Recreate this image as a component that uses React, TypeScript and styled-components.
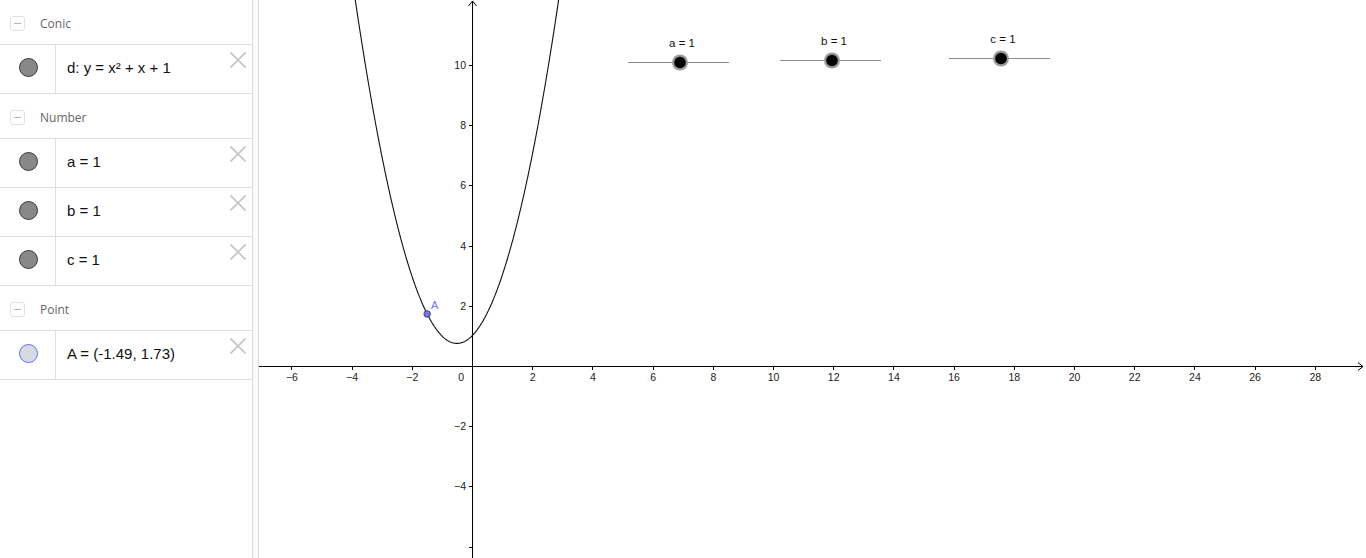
import React from "react";
import styled, { createGlobalStyle } from "styled-components";

const GlobalStyle = createGlobalStyle`
  html, body { margin: 0; padding: 0; background: #fff; }
  body { font-family: "Liberation Sans", Arial, sans-serif; overflow: hidden; }
  #root { width: 1366px; height: 558px; }
`;

const Layout = styled.div`
  display: flex;
  width: 1366px;
  height: 558px;
  overflow: hidden;
`;

const AlgebraPanel = styled.div`
  width: 252px;
  flex: none;
  height: 100%;
  border-right: 1px solid #dcdcdc;
  background: #fff;
  display: flex;
  flex-direction: column;
`;

const Splitter = styled.div`
  width: 5px;
  flex: none;
  height: 100%;
  background: #fafafa;
  border-right: 1px solid #dcdcdc;
`;

const GraphView = styled.div`
  flex: 1;
  height: 100%;
  position: relative;
  overflow: hidden;
`;

const GroupHeader = styled.div`
  height: 44px;
  border-bottom: 1px solid #dedede;
  display: flex;
  align-items: center;
  padding-left: 10px;
  padding-top: 2px;
  gap: 15px;
  box-sizing: border-box;
  height: 45px;
`;

const CollapseToggle = styled.span`
  width: 13px;
  height: 13px;
  border: 1px solid #e2e2e2;
  border-radius: 3px;
  display: flex;
  align-items: center;
  justify-content: center;
  &::before {
    content: "";
    width: 7px;
    height: 1px;
    background: #b5b5b5;
  }
`;

const GroupTitle = styled.span`
  font-family: "Open Sans", "Noto Sans", sans-serif;
  font-size: 12px;
  color: #666;
`;

const ItemRow = styled.div`
  height: 48px;
  border-bottom: 1px solid #dedede;
  display: flex;
  position: relative;
  box-sizing: content-box;
`;

const MarkerCell = styled.div`
  width: 56px;
  flex: none;
  border-right: 1px solid #dedede;
  display: flex;
  align-items: center;
  justify-content: center;
  padding-bottom: 4px;
  padding-left: 1px;
  box-sizing: border-box;
`;

const Marker = styled.span<{ $point?: boolean }>`
  width: 17px;
  height: 17px;
  border-radius: 50%;
  background: ${(p) => (p.$point ? "#d9d9e1" : "#888888")};
  border: 1px solid ${(p) => (p.$point ? "#6a6af0" : "#3a3a3a")};
`;

const ItemText = styled.div`
  flex: 1;
  display: flex;
  align-items: center;
  padding-left: 11px;
  padding-bottom: 4px;
  font-family: "Liberation Sans", Arial, sans-serif;
  font-size: 15px;
  color: #111;
  white-space: pre;
`;

const DeleteButton = styled.span`
  position: absolute;
  right: 6px;
  top: 7px;
  width: 16px;
  height: 16px;
  display: block;
  svg { display: block; }
`;

const CloseIcon = () => (
  <svg width="16" height="16" viewBox="0 0 16 16">
    <path d="M0.5 0.5 L15.5 15.5 M15.5 0.5 L0.5 15.5" stroke="#c4c4c4" strokeWidth="1.6" fill="none" />
  </svg>
);

type Item = { text: React.ReactNode; point?: boolean };
type Group = { title: string; items: Item[] };

const groups: Group[] = [
  { title: "Conic", items: [{ text: <>d: y = x² + x + 1</> }] },
  {
    title: "Number",
    items: [{ text: "a = 1" }, { text: "b = 1" }, { text: "c = 1" }],
  },
  { title: "Point", items: [{ text: "A = (-1.49, 1.73)", point: true }] },
];

/* ---------- graph geometry (page coordinates) ---------- */
const OX = 472;
const OY = 366;
const S = 30.1;
const px = (x: number) => OX + x * S;
const py = (y: number) => OY - y * S;

const parabolaPath = (() => {
  const pts: string[] = [];
  for (let x = -4.2; x <= 3.2; x += 0.02) {
    const y = x * x + x + 1;
    pts.push(`${pts.length ? "L" : "M"}${px(x).toFixed(2)} ${py(y).toFixed(2)}`);
  }
  return pts.join(" ");
})();

const xTicks = Array.from({ length: 18 }, (_, i) => -6 + i * 2).filter((v) => v !== 0);
const yTicks = [10, 8, 6, 4, 2, -2, -4, -6];

const fmt = (v: number) => (v < 0 ? `\u2212${Math.abs(v)}` : `${v}`);

const Slider = ({ x1, x2, y, knob, label }: { x1: number; x2: number; y: number; knob: number; label: string }) => (
  <g>
    <line x1={x1} y1={y} x2={x2} y2={y} stroke="#8a8a8a" strokeWidth="1.2" />
    <circle cx={knob} cy={y} r={8} fill="#9a9a9a" />
    <circle cx={knob} cy={y} r={5.8} fill="#000" />
    <text x={knob + 2} y={y - 15.5} textAnchor="middle" fontSize="11.5" fontFamily="Liberation Sans, Arial, sans-serif" fill="#111">
      {label}
    </text>
  </g>
);

const Graph = () => (
  <svg width="1107" height="558" viewBox="259 0 1107 558" style={{ display: "block" }}>
    <g fontFamily="Liberation Sans, Arial, sans-serif" fontSize="10.5" fill="#222">
      {/* axes */}
      <line x1={259} y1={OY + 0.5} x2={1363} y2={OY + 0.5} stroke="#000" strokeWidth="1" />
      <line x1={OX + 0.5} y1={1} x2={OX + 0.5} y2={558} stroke="#000" strokeWidth="1" />
      <path d={`M1358 ${OY - 3.5} L1363 ${OY + 0.5} L1358 ${OY + 4.5}`} stroke="#000" strokeWidth="1" fill="none" />
      <path d={`M${OX - 3.5} 6 L${OX + 0.5} 1 L${OX + 4.5} 6`} stroke="#000" strokeWidth="1" fill="none" />
      {xTicks.map((v) => (
        <g key={`x${v}`}>
          <line x1={Math.round(px(v)) + 0.5} y1={OY + 1} x2={Math.round(px(v)) + 0.5} y2={OY + 4} stroke="#000" strokeWidth="1" />
          <text x={px(v) + 0.5} y={381} textAnchor="middle">{fmt(v)}</text>
        </g>
      ))}
      <text x={464} y={381} textAnchor="end">0</text>
      {yTicks.map((v) => (
        <g key={`y${v}`}>
          <line x1={OX - 3} y1={Math.round(py(v)) + 0.5} x2={OX} y2={Math.round(py(v)) + 0.5} stroke="#000" strokeWidth="1" />
          {v !== -6 && (
            <text x={466} y={py(v) + 4} textAnchor="end">{fmt(v)}</text>
          )}
        </g>
      ))}
      {/* conic d */}
      <path d={parabolaPath} stroke="#111" strokeWidth="1.1" fill="none" />
      {/* point A */}
      <circle cx={px(-1.49)} cy={py(1.73)} r={3.3} fill="#7676e8" stroke="#333" strokeWidth="0.8" />
      <text x={431} y={309} fontSize="11" fill="#7070e0">A</text>
      {/* sliders */}
      <Slider x1={628} x2={729} y={62.5} knob={680} label="a = 1" />
      <Slider x1={780} x2={881} y={60.5} knob={832} label="b = 1" />
      <Slider x1={949} x2={1050} y={58.5} knob={1001} label="c = 1" />
    </g>
  </svg>
);

export default function App() {
  return (
    <>
      <GlobalStyle />
      <Layout>
        <AlgebraPanel>
          {groups.map((g) => (
            <React.Fragment key={g.title}>
              <GroupHeader>
                <CollapseToggle />
                <GroupTitle>{g.title}</GroupTitle>
              </GroupHeader>
              {g.items.map((it, i) => (
                <ItemRow key={i}>
                  <MarkerCell>
                    <Marker $point={it.point} />
                  </MarkerCell>
                  <ItemText>{it.text}</ItemText>
                  <DeleteButton>
                    <CloseIcon />
                  </DeleteButton>
                </ItemRow>
              ))}
            </React.Fragment>
          ))}
        </AlgebraPanel>
        <Splitter />
        <GraphView>
          <Graph />
        </GraphView>
      </Layout>
    </>
  );
}
